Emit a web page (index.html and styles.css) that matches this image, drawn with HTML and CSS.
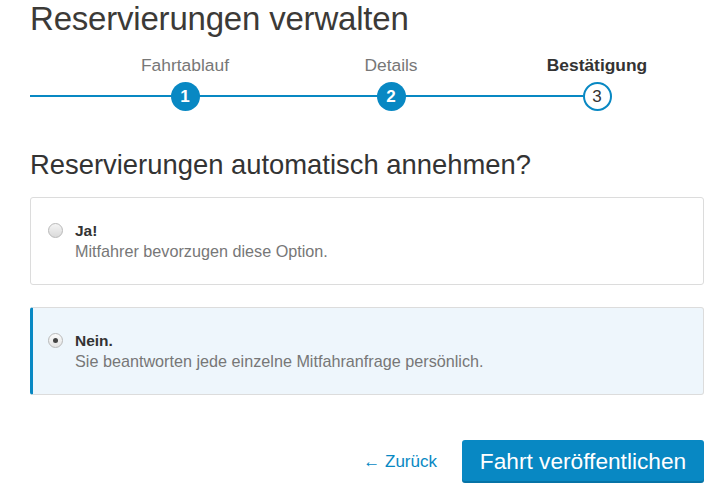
FILE: index.html
```html
<!DOCTYPE html>
<html lang="de">
<head>
<meta charset="utf-8">
<link rel="stylesheet" href="styles.css">
</head>
<body>
<main class="page">
  <h1 class="title">Reservierungen verwalten</h1>
  <div class="stepper">
    <div class="step done">
      <span class="step-label">Fahrtablauf</span>
      <span class="step-dot">1</span>
    </div>
    <div class="step done">
      <span class="step-label">Details</span>
      <span class="step-dot">2</span>
    </div>
    <div class="step current">
      <span class="step-label">Bestätigung</span>
      <span class="step-dot">3</span>
    </div>
  </div>
  <h2 class="question">Reservierungen automatisch annehmen?</h2>
  <div class="options">
    <label class="option">
      <span class="radio"></span>
      <span class="option-text">
        <strong class="option-title">Ja!</strong>
        <span class="option-desc">Mitfahrer bevorzugen diese Option.</span>
      </span>
    </label>
    <label class="option selected">
      <span class="radio checked"></span>
      <span class="option-text">
        <strong class="option-title">Nein.</strong>
        <span class="option-desc">Sie beantworten jede einzelne Mitfahranfrage persönlich.</span>
      </span>
    </label>
  </div>
  <div class="actions">
    <a class="back" href="#">← Zurück</a>
    <button class="publish" type="button">Fahrt veröffentlichen</button>
  </div>
</main>
</body>
</html>
```
FILE: styles.css
```css
* { box-sizing: border-box; }
html, body { margin: 0; padding: 0; background: #fff; }
body {
  font-family: "Liberation Sans", Arial, sans-serif;
  color: #333;
}
.page {
  width: 723px;
  padding: 0 19px 0 30px;
}
.title {
  margin: 0;
  font-size: 33px;
  font-weight: normal;
  line-height: 38px;
  color: #3c3a37;
  letter-spacing: -0.2px;
}
.stepper {
  position: relative;
  display: grid;
  grid-template-columns: 206px 206px 206px;
  margin: 17px 0 0 52px;
}
.stepper::before {
  content: "";
  position: absolute;
  left: -52px;
  width: 553px;
  top: 40px;
  height: 2px;
  background: #0888c3;
}
.step {
  position: relative;
  display: flex;
  flex-direction: column;
  align-items: center;
}
.step-label {
  font-size: 17.4px;
  line-height: 20px;
  color: #777;
  white-space: nowrap;
}
.current .step-label {
  font-weight: bold;
  color: #333;
}
.step-dot {
  margin-top: 7px;
  width: 29px;
  height: 29px;
  border-radius: 50%;
  display: flex;
  align-items: center;
  justify-content: center;
  font-size: 17px;
  font-weight: bold;
  color: #fff;
  background: #0888c3;
}
.current .step-dot {
  background: #fff;
  border: 2px solid #0888c3;
  color: #333;
  font-weight: normal;
}
.question {
  margin: 38px 0 0;
  font-size: 27.4px;
  font-weight: normal;
  line-height: 32px;
  color: #333;
}
.options {
  margin-top: 16px;
  display: flex;
  flex-direction: column;
  gap: 22px;
}
.option {
  display: flex;
  align-items: flex-start;
  gap: 12px;
  height: 88px;
  padding: 23px 17px 0;
  border: 1px solid #dcdcdc;
  border-radius: 3px;
  background: #fff;
}
.option.selected {
  background: #eef6fc;
  border-left: 3px solid #0888c3;
  padding-left: 15px;
}
.radio {
  margin-top: 2px;
  width: 15px;
  height: 15px;
  border-radius: 50%;
  border: 1px solid #b9b9b9;
  background: linear-gradient(#f4f4f4, #dadada);
  position: relative;
  flex: none;
}
.radio.checked {
  background: linear-gradient(#fbfbfb, #e4e4e4);
}
.radio.checked::after {
  content: "";
  position: absolute;
  left: 4px;
  top: 4px;
  width: 5px;
  height: 5px;
  border-radius: 50%;
  background: #444;
}
.option-text {
  display: flex;
  flex-direction: column;
}
.option-title {
  font-size: 15.5px;
  line-height: 20px;
  color: #333;
}
.option-desc {
  font-size: 16.2px;
  line-height: 21px;
  color: #777;
}
.actions {
  margin-top: 45px;
  display: flex;
  justify-content: flex-end;
  align-items: center;
  gap: 25px;
}
.back {
  font-size: 17px;
  color: #0888c3;
  text-decoration: none;
}
.publish {
  width: 242px;
  height: 43px;
  border: none;
  border-radius: 3px;
  background: #0888c3;
  color: #fff;
  font-family: inherit;
  font-size: 22.7px;
  padding: 0;
  box-shadow: inset 0 -2px 0 rgba(0,0,0,0.15);
}
```
